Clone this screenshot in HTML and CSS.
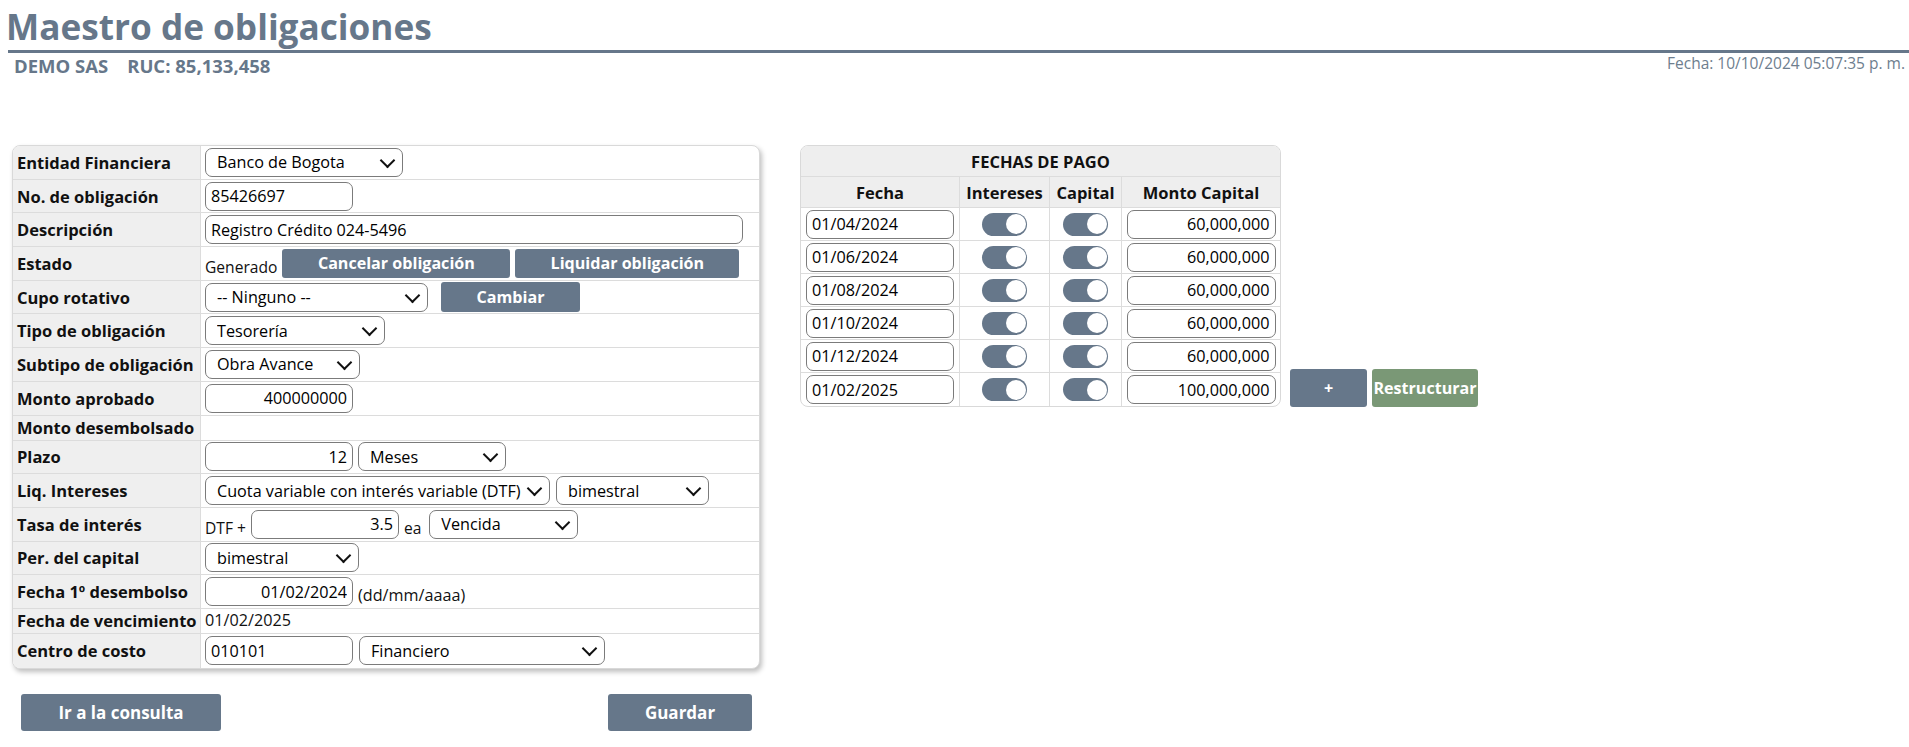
FILE: index.html
```html
<!DOCTYPE html>
<html lang="es">
<head>
<meta charset="utf-8">
<title>Maestro de obligaciones</title>
<link rel="stylesheet" href="styles.css">
</head>
<body>
<header>
  <div class="title-bar"><h1 class="title">Maestro de obligaciones</h1></div>
  <div class="subbar">
    <div class="company"><span>DEMO SAS</span><span>RUC: 85,133,458</span></div>
    <div class="date">Fecha: 10/10/2024 05:07:35 p. m.</div>
  </div>
</header>
<main class="content">
  <section class="left">
    <div class="card">
      <div class="row"><div class="lbl">Entidad Financiera</div><div class="val"><span class="sel w198"><select><option>Banco de Bogota</option></select></span></div></div>
      <div class="row"><div class="lbl">No. de obligación</div><div class="val"><input class="inp w148" value="85426697"></div></div>
      <div class="row"><div class="lbl">Descripción</div><div class="val"><input class="inp w538" value="Registro Crédito 024-5496"></div></div>
      <div class="row"><div class="lbl">Estado</div><div class="val end"><span class="txt sm">Generado</span><button class="btn w228">Cancelar obligación</button><button class="btn w224">Liquidar obligación</button></div></div>
      <div class="row"><div class="lbl">Cupo rotativo</div><div class="val"><span class="sel w223"><select><option>-- Ninguno --</option></select></span><button class="btn w139 ml8">Cambiar</button></div></div>
      <div class="row"><div class="lbl">Tipo de obligación</div><div class="val"><span class="sel w180"><select><option>Tesorería</option></select></span></div></div>
      <div class="row"><div class="lbl">Subtipo de obligación</div><div class="val"><span class="sel w155"><select><option>Obra Avance</option></select></span></div></div>
      <div class="row"><div class="lbl">Monto aprobado</div><div class="val"><input class="inp w148 r" value="400000000"></div></div>
      <div class="row short"><div class="lbl">Monto desembolsado</div><div class="val"></div></div>
      <div class="row"><div class="lbl">Plazo</div><div class="val"><input class="inp w148 r" value="12"><span class="sel w148"><select><option>Meses</option></select></span></div></div>
      <div class="row"><div class="lbl">Liq. Intereses</div><div class="val g6"><span class="sel w345"><select><option>Cuota variable con interés variable (DTF)</option></select></span><span class="sel w153"><select><option>bimestral</option></select></span></div></div>
      <div class="row"><div class="lbl">Tasa de interés</div><div class="val end"><span class="txt sm">DTF +</span><input class="inp w148 r" value="3.5"><span class="txt sm">ea</span><span class="sel w149 ml3"><select><option>Vencida</option></select></span></div></div>
      <div class="row"><div class="lbl">Per. del capital</div><div class="val"><span class="sel w154"><select><option>bimestral</option></select></span></div></div>
      <div class="row"><div class="lbl">Fecha 1º desembolso</div><div class="val end"><input class="inp w148 r" value="01/02/2024"><span class="txt">(dd/mm/aaaa)</span></div></div>
      <div class="row short"><div class="lbl">Fecha de vencimiento</div><div class="val"><span class="txt">01/02/2025</span></div></div>
      <div class="row"><div class="lbl">Centro de costo</div><div class="val g6"><input class="inp w148" value="010101"><span class="sel w246"><select><option>Financiero</option></select></span></div></div>
    </div>
    <div class="actions">
      <button class="btn lg w200">Ir a la consulta</button>
      <button class="btn lg w144">Guardar</button>
    </div>
  </section>
  <section class="right">
    <div class="pay">
      <div class="ph">FECHAS DE PAGO</div>
      <div class="hc">Fecha</div><div class="hc">Intereses</div><div class="hc">Capital</div><div class="hc">Monto Capital</div>

      <div class="dc"><input class="inp w148" value="01/04/2024"></div><div class="dc"><span class="tog"><span class="knob"></span></span></div><div class="dc"><span class="tog"><span class="knob"></span></span></div><div class="dc"><input class="inp w149 r" value="60,000,000"></div>
      <div class="dc"><input class="inp w148" value="01/06/2024"></div><div class="dc"><span class="tog"><span class="knob"></span></span></div><div class="dc"><span class="tog"><span class="knob"></span></span></div><div class="dc"><input class="inp w149 r" value="60,000,000"></div>
      <div class="dc"><input class="inp w148" value="01/08/2024"></div><div class="dc"><span class="tog"><span class="knob"></span></span></div><div class="dc"><span class="tog"><span class="knob"></span></span></div><div class="dc"><input class="inp w149 r" value="60,000,000"></div>
      <div class="dc"><input class="inp w148" value="01/10/2024"></div><div class="dc"><span class="tog"><span class="knob"></span></span></div><div class="dc"><span class="tog"><span class="knob"></span></span></div><div class="dc"><input class="inp w149 r" value="60,000,000"></div>
      <div class="dc"><input class="inp w148" value="01/12/2024"></div><div class="dc"><span class="tog"><span class="knob"></span></span></div><div class="dc"><span class="tog"><span class="knob"></span></span></div><div class="dc"><input class="inp w149 r" value="60,000,000"></div>
      <div class="dc"><input class="inp w148" value="01/02/2025"></div><div class="dc"><span class="tog"><span class="knob"></span></span></div><div class="dc"><span class="tog"><span class="knob"></span></span></div><div class="dc"><input class="inp w149 r" value="100,000,000"></div>
    </div>
    <div class="pay-actions">
      <button class="btn plus">+</button>
      <button class="btn green">Restructurar</button>
    </div>
  </section>
</main>
</body>
</html>
```
FILE: styles.css
```css
* { box-sizing: border-box; }

body {
  margin: 0;
  font-family: "Open Sans", "Noto Sans", sans-serif;
  font-size: 16.2px;
  color: #111;
  background: #fff;
}

.title-bar {
  margin-left: 8px;
  padding: 4px 0 2px 0;
  border-bottom: 3px solid #66778a;
}

.title {
  margin: 0;
  font-size: 35.2px;
  line-height: 44px;
  font-weight: 700;
  color: #66778a;
  text-indent: -2px;
}

.subbar {
  display: flex;
  justify-content: space-between;
  align-items: flex-start;
  margin-left: 8px;
}

.company {
  display: flex;
  gap: 19px;
  margin-top: 1px;
  padding-left: 6px;
  font-size: 18.5px;
  line-height: 24px;
  font-weight: 700;
  color: #66778a;
}

.date {
  padding-right: 4px;
  font-size: 15.5px;
  line-height: 21px;
  color: #6e7e8e;
}

.content {
  display: flex;
  align-items: flex-start;
  padding-top: 67px;
  padding-left: 12px;
}

.left { width: 748px; flex: none; }

.card {
  border: 1px solid #d9d9d9;
  border-radius: 8px;
  overflow: hidden;
  background: #fff;
  box-shadow: 2px 3px 5px rgba(0, 0, 0, 0.25);
}

.row {
  display: flex;
  height: 33.7px;
  border-bottom: 1px solid #dcdcdc;
}
.row:last-child { border-bottom: 0; }
.row.short { height: 25px; }

.lbl {
  flex: none;
  width: 188px;
  display: flex;
  align-items: center;
  padding-left: 4px;
  background: #efefef;
  border-right: 1px solid #dcdcdc;
  font-size: 16.5px;
  font-weight: 700;
  white-space: nowrap;
}

.val {
  flex: 1;
  display: flex;
  align-items: center;
  gap: 5px;
  padding-left: 4px;
  white-space: nowrap;
}
.val.end { align-items: flex-end; padding-bottom: 1.6px; }
.val.g6 { gap: 6px; }

.txt { line-height: 21px; }
.txt.sm { font-size: 15.6px; }

.inp {
  flex: none;
  height: 29px;
  padding: 0 5px;
  border: 1px solid #7b7b7b;
  border-radius: 7px;
  background: #fff;
  color: #000;
  font: inherit;
}
.inp.r { text-align: right; }

.sel {
  position: relative;
  display: block;
  flex: none;
  height: 29px;
}
.sel select {
  -webkit-appearance: none;
  appearance: none;
  width: 100%;
  height: 29px;
  padding: 0 24px 0 11px;
  border: 1px solid #7b7b7b;
  border-radius: 7px;
  background: #fff;
  color: #000;
  font: inherit;
}
.sel::after {
  content: "";
  position: absolute;
  right: 10px;
  top: 50%;
  width: 9px;
  height: 9px;
  margin-top: -7.5px;
  border-right: 2px solid #111;
  border-bottom: 2px solid #111;
  transform: rotate(45deg);
  pointer-events: none;
}

.w538 { width: 538px; }
.w345 { width: 345px; }
.w246 { width: 246px; }
.w223 { width: 223px; }
.w198 { width: 198px; }
.w180 { width: 180px; }
.w155 { width: 155px; }
.w154 { width: 154px; }
.w153 { width: 153px; }
.w149 { width: 149px; }
.w148 { width: 148px; }
.w228 { width: 228px; }
.w224 { width: 224px; }
.w139 { width: 139px; }
.w200 { width: 200px; }
.w144 { width: 144px; }
.ml8 { margin-left: 8px; }
.ml3 { margin-left: 3px; }

.btn {
  flex: none;
  height: 29.5px;
  padding: 0;
  border: 0;
  border-radius: 3px;
  background: #66778a;
  color: #fff;
  font-family: inherit;
  font-size: 16.1px;
  font-weight: 700;
}
.btn.lg { height: 37px; font-size: 17px; }

.actions {
  display: flex;
  justify-content: space-between;
  margin-top: 25px;
  padding: 0 8px 0 9px;
}

.right {
  display: flex;
  align-items: flex-end;
  gap: 9px;
  margin-left: 40px;
}

.pay {
  display: grid;
  grid-template-columns: 159px 90px 72px 158px;
  width: 481px;
  border: 1px solid #d9d9d9;
  border-radius: 8px;
  overflow: hidden;
  background: #fff;
}

.ph {
  grid-column: 1 / -1;
  height: 31px;
  display: flex;
  align-items: center;
  justify-content: center;
  background: #eeeeee;
  border-bottom: 1px solid #dcdcdc;
  font-size: 16.5px;
  font-weight: 700;
}

.hc {
  height: 31px;
  display: flex;
  align-items: center;
  justify-content: center;
  background: #eeeeee;
  border-right: 1px solid #dcdcdc;
  border-bottom: 1px solid #dcdcdc;
  font-size: 16.5px;
  font-weight: 700;
  white-space: nowrap;
}
.hc:nth-child(5) { border-right: 0; }

.dc {
  height: 33px;
  display: flex;
  align-items: center;
  justify-content: center;
  border-right: 1px solid #dcdcdc;
  border-bottom: 1px solid #dcdcdc;
}
.dc:nth-child(4n+1) { border-right: 0; }
.dc:nth-last-child(-n+4) { border-bottom: 0; }

.tog {
  display: flex;
  justify-content: flex-end;
  align-items: center;
  width: 45px;
  height: 23px;
  padding: 0 1.5px;
  border-radius: 12px;
  background: #66778a;
}
.knob {
  width: 20px;
  height: 20px;
  border-radius: 50%;
  background: #fff;
}

.pay-actions {
  display: flex;
  gap: 5px;
}
.btn.plus { width: 77px; height: 38px; }
.btn.green { width: 106px; height: 38px; background: #7a9876; }
```
